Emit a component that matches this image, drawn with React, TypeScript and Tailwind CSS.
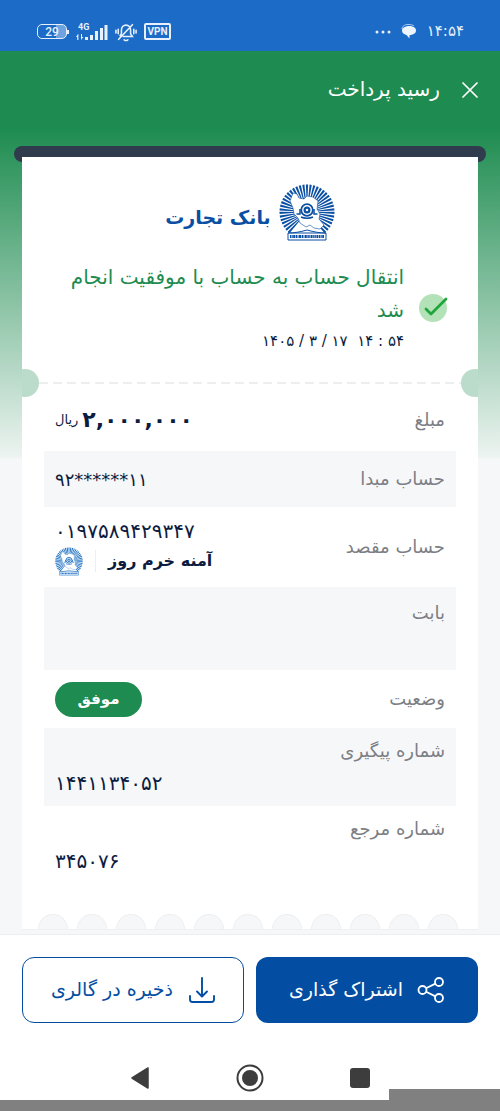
import type { ReactNode } from "react";

function Emblem({ className, tone }: { className: string; tone: string }) {
  const rays = Array.from({ length: 37 }, (_, i) => -228 + i * 7.667);
  const point = (deg: number, radius: number) => {
    const a = (deg * Math.PI) / 180;
    return `${(28 + radius * Math.cos(a)).toFixed(2)},${(28 + radius * Math.sin(a)).toFixed(2)}`;
  };
  return (
    <svg viewBox="0 0 56 57" className={className} aria-hidden="true">
      <g fill={tone}>
        {rays.map((deg) => (
          <polygon
            key={deg}
            points={[point(deg - 2, 8), point(deg - 2.3, 27.5), point(deg + 2.3, 27.5), point(deg + 2, 8)].join(" ")}
          />
        ))}
      </g>
      <path
        d="M14 9l4 1 2 4 5 1 3-3 6 1 5 4-1 8 3 5-1 5 5 6-4 4-6-1-4-3-4 2-6-4-2-5-4-4-1-6-3-7z"
        fill="#fff"
        stroke={tone}
        strokeWidth="0.6"
        strokeLinejoin="round"
      />
      <g fill="none" stroke={tone}>
        <circle cx="28" cy="26" r="5.8" strokeWidth="1.8" />
        <circle cx="28" cy="26" r="2.4" strokeWidth="2.2" />
        <path d="M17.500 30h3.500v-5M38.500 30H35v-5M22 33c3 1.500 9 1.500 12 0" strokeWidth="1.5" />
      </g>
      <path d="M9 49c6 0 12-1 19-3 7 2 13 3 19 3v7H9z" fill="#fff" stroke={tone} strokeWidth="1" />
      <path d="M11 52.500h34" stroke={tone} strokeWidth="3" strokeDasharray="1.4 0.5 0.8 0.5 2 0.6" />
      <path d="M9 49h38" stroke={tone} strokeWidth="1" />
    </svg>
  );
}

function StatusBar() {
  return (
    <div dir="ltr" className="flex h-[51px] items-center justify-between bg-[#1b6bc7] pt-3 pr-9 pl-[37px] text-[#e8f1fb]">
      <div className="flex items-center gap-[7px]">
        <div className="flex items-center">
          <div className="flex h-[15px] w-[30px] items-center justify-center rounded-[5px] border border-[#e8f1fb] bg-linear-to-r from-[#1b6bc7] from-65% to-[#6ea3e0] to-65% font-['Roboto',sans-serif] text-[12px] leading-none font-medium">
            29
          </div>
          <span className="h-1 w-0.5 bg-[#e8f1fb]" />
        </div>
        <svg viewBox="0 0 32 18" className="h-[18px] w-8" fill="currentColor" role="img" aria-label="4G">
          <text x="2" y="7" fontSize="9" fontWeight="700" fontFamily="Roboto, sans-serif">4G</text>
          <path d="M2 11l-2 3h1.200v3h1.200v-6zM5 17l2.400-3H6v-3H5z" />
          <path d="M9 14h3v3H9zM14 12h3v5h-3zM19 8h3v9h-3zM24 5h3v12h-3zM28.500 2h3v15h-3z" />
        </svg>
        <svg viewBox="0 0 24 20" className="h-5 w-[22px]" fill="none" stroke="currentColor" strokeWidth="1.700" strokeLinecap="round" aria-hidden="true">
          <path d="M9 15h10l-2-3V8c0-3-2-5.500-5-5.500S7 5 7 8v4l-1.500 2M4 18L19 2M3.500 7v5M1 8v3M20.500 7v5M23 8v3M10 18.500c1 .8 3 .8 4 0" />
        </svg>
        <div className="flex h-[17px] w-[27px] items-center justify-center rounded-xs border-2 border-current font-['Roboto',sans-serif] text-[10px] leading-none font-bold">
          VPN
        </div>
      </div>
      <div className="flex items-center gap-2.5">
        <svg viewBox="0 0 16 4" className="h-1 w-4" fill="currentColor" aria-hidden="true">
          <circle cx="2" cy="2" r="1.500" />
          <circle cx="8" cy="2" r="1.500" />
          <circle cx="14" cy="2" r="1.500" />
        </svg>
        <svg viewBox="0 0 16 15" className="h-[15px] w-4" aria-hidden="true">
          <path d="M1 5c0-3 3-4.500 6-4.500S12 1 13 2" fill="none" stroke="#a9caf0" />
          <path d="M8 2c4 0 7 1.600 7 4.600S12 11 8.500 11.200L8.500 14.500 5.500 11C3 10.500 1 9 1 6.600S4 2 8 2z" fill="#eef5fd" />
        </svg>
        <time className="font-['DejaVu_Sans',sans-serif] text-[15px] leading-none">۱۴:۵۴</time>
      </div>
    </div>
  );
}

function Row({
  label,
  shaded,
  className,
  children,
}: {
  label: string;
  shaded?: boolean;
  className: string;
  children?: ReactNode;
}) {
  return (
    <div className={`flex justify-between px-[11px] ${shaded ? "bg-[#f6f7f9]" : ""} ${className}`}>
      <dt className="text-[18px] leading-6 text-[#7d7f86]">{label}</dt>
      <dd className="text-[#0c1c40]">{children}</dd>
    </div>
  );
}

export default function App() {
  return (
    <div dir="rtl" lang="fa" className="bg-white font-['DejaVu_Sans',sans-serif] text-[#0c1c40]">
      <StatusBar />

      <main className="overflow-hidden bg-[#f6f7f9] bg-[linear-gradient(to_bottom,#1e8c50_0px,#1e8c50_78px,#edf4f1_407px,#f6f7f9_408px)] pb-1">
        <header className="flex h-[95px] items-start gap-[22px] px-[22px] pt-6 text-white">
          <button type="button" aria-label="بستن" className="flex h-[30px] w-4 items-center justify-center">
            <svg viewBox="0 0 16 16" className="size-4" stroke="currentColor" strokeWidth="1.700" strokeLinecap="round" aria-hidden="true">
              <path d="M1 1l14 14M15 1L1 15" />
            </svg>
          </button>
          <h1 className="text-[20px] leading-7">رسید پرداخت</h1>
        </header>

        <div className="mx-3.5 h-4 rounded-full bg-[#313b4e]" />

        <section className="relative mx-[22px] -mt-[5px] border-b border-[#eef0f2] bg-white pt-[27px]">
          <div className="flex items-center justify-center gap-2 text-[#0a4fa3]">
            <Emblem className="h-[57px] w-14" tone="#0a4fa3" />
            <span className="pt-2 text-[19px] leading-8 font-bold">بانک تجارت</span>
          </div>

          <div className="mt-5 flex items-center gap-[14px] pr-[30px] pl-8">
            <svg viewBox="0 0 30 28" className="h-7 w-[30px] shrink-0" aria-hidden="true">
              <circle cx="15" cy="14" r="14" fill="#b4e2b8" />
              <path d="M8 15l5 5L28 5" fill="none" stroke="#1fa53c" strokeWidth="2.800" strokeLinecap="round" strokeLinejoin="round" />
            </svg>
            <div>
              <p className="text-[20px] leading-[33px] text-[#1e8c50]">انتقال حساب به حساب با موفقیت انجام شد</p>
              <p dir="ltr" className="text-right text-[15px] leading-7 whitespace-pre">
                {"۱۴۰۵ / ۳ / ۱۷  ۱۴ : ۵۴"}
              </p>
            </div>
          </div>

          <div className="mt-3.5 flex h-7 items-center justify-between overflow-hidden">
            <span className="-mr-[11px] size-7 shrink-0 rounded-full bg-[#bcdccb]" />
            <svg className="h-0.5 min-w-0 grow" aria-hidden="true">
              <line x1="0" y1="1" x2="100%" y2="1" stroke="#eceef0" strokeWidth="2" strokeDasharray="9 5" />
            </svg>
            <span className="-ml-[11px] size-7 shrink-0 rounded-full bg-[#bcdccb]" />
          </div>

          <dl className="mx-[22px]">
            <Row label="مبلغ" className="h-[54px] items-center pb-2">
              <span dir="ltr" className="flex items-center gap-1">
                <span className="text-[13px]">ریال</span>
                <span className="text-[22px] leading-8 font-bold">۲,۰۰۰,۰۰۰</span>
              </span>
            </Row>
            <Row label="حساب مبدا" shaded className="h-14 items-center">
              <span dir="ltr" className="text-[18px]">۹۲******۱۱</span>
            </Row>
            <Row label="حساب مقصد" className="h-20 items-center">
              <div dir="ltr">
                <p className="text-[20px] leading-7">۰۱۹۷۵۸۹۴۲۹۳۴۷</p>
                <div className="flex items-center">
                  <Emblem className="h-[29px] w-7" tone="#2272c3" />
                  <span className="mx-3 h-[22px] w-px bg-[#eceef0]" />
                  <span dir="rtl" className="text-[16px] leading-8 font-bold">آمنه خرم روز</span>
                </div>
              </div>
            </Row>
            <Row label="بابت" shaded className="h-[83px] items-start pt-3.5" />
            <Row label="وضعیت" className="h-[58px] items-center">
              <span className="flex h-[35px] w-[87px] items-center justify-center rounded-full bg-[#1e8c50] text-[15px] font-bold text-white">
                موفق
              </span>
            </Row>
            <Row label="شماره پیگیری" shaded className="h-[78px] flex-col justify-center gap-2">
              <span dir="ltr" className="block text-left text-[20px] leading-6">۱۴۴۱۱۳۴۰۵۲</span>
            </Row>
            <Row label="شماره مرجع" className="h-[78px] flex-col justify-center gap-2">
              <span dir="ltr" className="block text-left text-[20px] leading-6">۳۴۵۰۷۶</span>
            </Row>
          </dl>

          <div dir="ltr" className="mt-[30px] flex justify-between pr-5 pl-4" aria-hidden="true">
            {Array.from({ length: 11 }, (_, i) => (
              <span key={i} className="h-[15px] w-[30px] rounded-t-full border border-b-0 border-[#eceef0] bg-[#f6f7f9]" />
            ))}
          </div>
        </section>
      </main>

      <footer className="border-t border-[#eceef0] bg-white px-[22px] pt-[22px]">
        <div className="grid grid-cols-2 gap-3">
          <button type="button" className="flex h-[66px] items-center justify-center gap-[14px] rounded-xl bg-[#034ea2] text-[19px] text-white">
            <svg viewBox="0 0 28 26" className="h-[26px] w-7" fill="none" stroke="currentColor" strokeWidth="1.800" aria-hidden="true">
              <circle cx="5.500" cy="13" r="4" />
              <circle cx="22" cy="5" r="4" />
              <circle cx="22" cy="21" r="4" />
              <path d="M9 11.200l9.500-4.600M9 14.800l9.500 4.600" />
            </svg>
            <span className="pb-0.5">اشتراک گذاری</span>
          </button>
          <button type="button" className="flex h-[66px] items-center justify-center gap-4 rounded-xl border border-[#034ea2] bg-white text-[19px] text-[#034ea2]">
            <svg viewBox="0 0 26 26" className="size-[26px]" fill="none" stroke="currentColor" strokeWidth="1.900" strokeLinecap="round" strokeLinejoin="round" aria-hidden="true">
              <path d="M13 1v18M8 14.500l5 5 5-5M1 19v3.500c0 1.500.8 2.500 2.500 2.500h19c1.700 0 2.500-1 2.500-2.500V19" />
            </svg>
            <span className="pb-0.5">ذخیره در گالری</span>
          </button>
        </div>
      </footer>

      <nav dir="ltr" className="relative bg-white pt-[41px] pb-2">
        <div className="mx-auto grid w-[330px] grid-cols-3 justify-items-center text-[#3d3d3d]">
          <button type="button" aria-label="بازگشت">
            <svg viewBox="0 0 28 28" className="size-7" fill="currentColor" stroke="currentColor" strokeWidth="1.500" strokeLinejoin="round" aria-hidden="true">
              <path d="M6 14l16-10v20z" />
            </svg>
          </button>
          <button type="button" aria-label="خانه">
            <svg viewBox="0 0 28 28" className="size-7" aria-hidden="true">
              <circle cx="14" cy="14" r="12.500" fill="none" stroke="currentColor" strokeWidth="2" />
              <circle cx="14" cy="14" r="8" fill="currentColor" />
            </svg>
          </button>
          <button type="button" aria-label="برنامه‌های اخیر">
            <svg viewBox="0 0 28 28" className="size-7" fill="currentColor" aria-hidden="true">
              <rect x="4" y="4" width="20" height="20" rx="3" />
            </svg>
          </button>
        </div>
        <div className="absolute right-0 bottom-0 h-[11px] w-2/9 bg-[#808080]" />
      </nav>
      <div className="h-[11px] bg-[#808080]" />
    </div>
  );
}
